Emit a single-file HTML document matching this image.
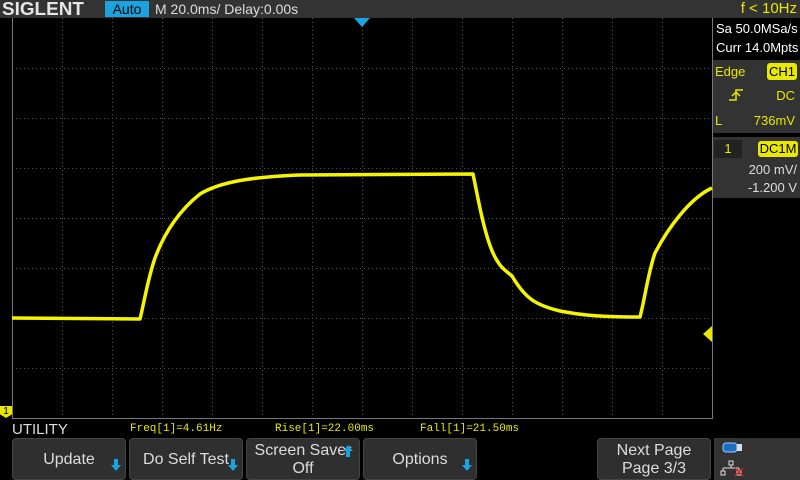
<!DOCTYPE html>
<html><head><meta charset="utf-8"><style>
*{margin:0;padding:0;box-sizing:border-box}
body{width:800px;height:480px;background:#000;position:relative;overflow:hidden;font-family:"Liberation Sans",sans-serif;color:#fff}
.a{position:absolute}
.btn{position:absolute;top:438px;height:42px;background:#2f2f2f;border:1px solid #444;border-radius:4px;color:#ddd;font-size:16px;text-align:center;line-height:18px}
.arr{position:absolute;right:4px;bottom:8px;width:0;height:0;border-left:5px solid transparent;border-right:5px solid transparent;border-top:6px solid #1aa3df}
.arr:before{content:"";position:absolute;left:-2px;top:-12px;width:4px;height:6px;background:#1aa3df}
.up{position:absolute;right:6px;top:6px;width:0;height:0;border-left:5px solid transparent;border-right:5px solid transparent;border-bottom:6px solid #1aa3df}
.up:before{content:"";position:absolute;left:-2px;top:6px;width:4px;height:6px;background:#1aa3df}
.y{color:#e8e800}
.m{font-family:"Liberation Mono",monospace;font-size:11px}
</style></head><body>
<div class="a" style="left:0;top:0;width:800px;height:18px;background:#333"></div>
<div class="a" style="left:2px;top:-1px;font-size:18px;font-weight:bold;color:#e6e6e6;transform:scaleX(1.05);transform-origin:left">SIGLENT</div>
<div class="a" style="left:105px;top:1px;width:44px;height:16px;background:#1aa3df;color:#000;font-size:14px;text-align:center;line-height:16px">Auto</div>
<div class="a" style="left:155px;top:1px;font-size:14px;color:#ddd">M 20.0ms/ Delay:0.00s</div>
<div class="a y" style="right:3px;top:0px;font-size:15px">f &lt; 10Hz</div>

<svg class="a" style="left:0;top:18px" width="713" height="402">
<g stroke="#555" stroke-width="1" stroke-dasharray="1,3">
<line x1="62.5" y1="0" x2="62.5" y2="400"/><line x1="112.5" y1="0" x2="112.5" y2="400"/><line x1="162.5" y1="0" x2="162.5" y2="400"/><line x1="212.5" y1="0" x2="212.5" y2="400"/><line x1="262.5" y1="0" x2="262.5" y2="400"/><line x1="312.5" y1="0" x2="312.5" y2="400"/><line x1="362.5" y1="0" x2="362.5" y2="400"/><line x1="412.5" y1="0" x2="412.5" y2="400"/><line x1="462.5" y1="0" x2="462.5" y2="400"/><line x1="512.5" y1="0" x2="512.5" y2="400"/><line x1="562.5" y1="0" x2="562.5" y2="400"/><line x1="612.5" y1="0" x2="612.5" y2="400"/><line x1="662.5" y1="0" x2="662.5" y2="400"/>
<line x1="12" y1="50.5" x2="712" y2="50.5"/><line x1="12" y1="100.5" x2="712" y2="100.5"/><line x1="12" y1="150.5" x2="712" y2="150.5"/><line x1="12" y1="200.5" x2="712" y2="200.5"/><line x1="12" y1="250.5" x2="712" y2="250.5"/><line x1="12" y1="300.5" x2="712" y2="300.5"/><line x1="12" y1="350.5" x2="712" y2="350.5"/>
</g>
<path d="M12.5 0V400.5H712.5V0" fill="none" stroke="#777" stroke-width="1"/>
<path d="M12 300 L140 301 C144 285 148 260 155 240 C165 213 180 192 200 176 C220 164 250 159 300 157 L473 156 C478 180 484 215 493 235 C500 250 505 252 512 258 C525 280 535 287 560 293 C580 297 600 299 640 299 C645 280 648 255 655 235 C668 210 690 180 712 170" fill="none" stroke="#f5f500" stroke-width="3.5" stroke-linejoin="round"/>
<polygon points="354,0 370,0 362,9" fill="#1aa3df"/>
<polygon points="712,308 712,324 703,316" fill="#e8e800"/>
</svg>
<div class="a" style="left:0;top:406px;width:12px;height:12px;background:#e8e800;color:#000;font-size:10px;text-align:center;line-height:11px;clip-path:polygon(0 0,100% 0,100% 70%,50% 100%,0 70%)">1</div>

<div class="a" style="left:713px;top:19px;width:87px;height:40px;background:#000;font-size:13px;line-height:19px;padding-left:3px">Sa 50.0MSa/s<br>Curr 14.0Mpts</div>
<div class="a" style="left:713px;top:60px;width:87px;height:73px;background:#333"></div>
<div class="a y" style="left:715px;top:64px;font-size:13px">Edge</div>
<div class="a" style="left:767px;top:63px;width:30px;height:17px;background:#e8e800;color:#000;font-size:13px;border-radius:3px;text-align:center;line-height:17px">CH1</div>
<svg class="a" style="left:728px;top:88px" width="16" height="14"><path d="M1 12H8V2H15M4 8L8 4L12 8" fill="none" stroke="#e8e800" stroke-width="1.5"/></svg>
<div class="a y" style="right:5px;top:88px;font-size:13px">DC</div>
<div class="a y" style="left:715px;top:113px;font-size:13px">L</div>
<div class="a y" style="right:5px;top:113px;font-size:13px">736mV</div>
<div class="a" style="left:713px;top:137px;width:87px;height:61px;background:#333"></div>
<div class="a" style="left:714px;top:140px;width:28px;height:18px;background:#222;color:#e8e800;font-size:13px;text-align:center;line-height:18px">1</div>
<div class="a" style="left:758px;top:141px;width:40px;height:16px;background:#e8e800;color:#000;font-size:13px;border-radius:3px;text-align:center;line-height:16px">DC1M</div>
<div class="a" style="right:3px;top:162px;font-size:13px;color:#ddd">200 mV/</div>
<div class="a" style="right:3px;top:180px;font-size:13px;color:#ddd">-1.200 V</div>

<div class="a" style="left:12px;top:421px;font-size:15px;color:#ddd">UTILITY</div>
<div class="a y m" style="left:130px;top:423px">Freq[1]=4.61Hz</div>
<div class="a y m" style="left:275px;top:423px">Rise[1]=22.00ms</div>
<div class="a y m" style="left:420px;top:423px">Fall[1]=21.50ms</div>

<div class="btn" style="left:12px;width:114px;padding-top:12px">Update<div class="arr"></div></div>
<div class="btn" style="left:129px;width:114px;padding-top:12px">Do Self Test<div class="arr"></div></div>
<div class="btn" style="left:246px;width:114px;padding-top:3px">Screen Saver<br>Off<div class="up"></div></div>
<div class="btn" style="left:363px;width:114px;padding-top:12px">Options<div class="arr"></div></div>
<div class="btn" style="left:597px;width:114px;padding-top:3px">Next Page<br>Page 3/3</div>
<div class="a" style="left:714px;top:438px;width:86px;height:42px;background:#333"></div>
<svg class="a" style="left:720px;top:441px" width="30" height="38"><rect x="3" y="2" width="14" height="9" rx="3" fill="#1a6fc0" stroke="#9cf"/><rect x="17" y="3" width="5" height="7" fill="#ddd"/><g fill="none" stroke="#ddd"><rect x="9" y="20" width="4" height="4"/><path d="M11 24V27M3 27H19M3 27V30M19 27V30"/><rect x="1" y="30" width="4" height="4"/><rect x="17" y="30" width="4" height="4"/></g><path d="M15 27L23 35M23 27L15 35" stroke="#e22" stroke-width="1.3"/></svg>
</body></html>
